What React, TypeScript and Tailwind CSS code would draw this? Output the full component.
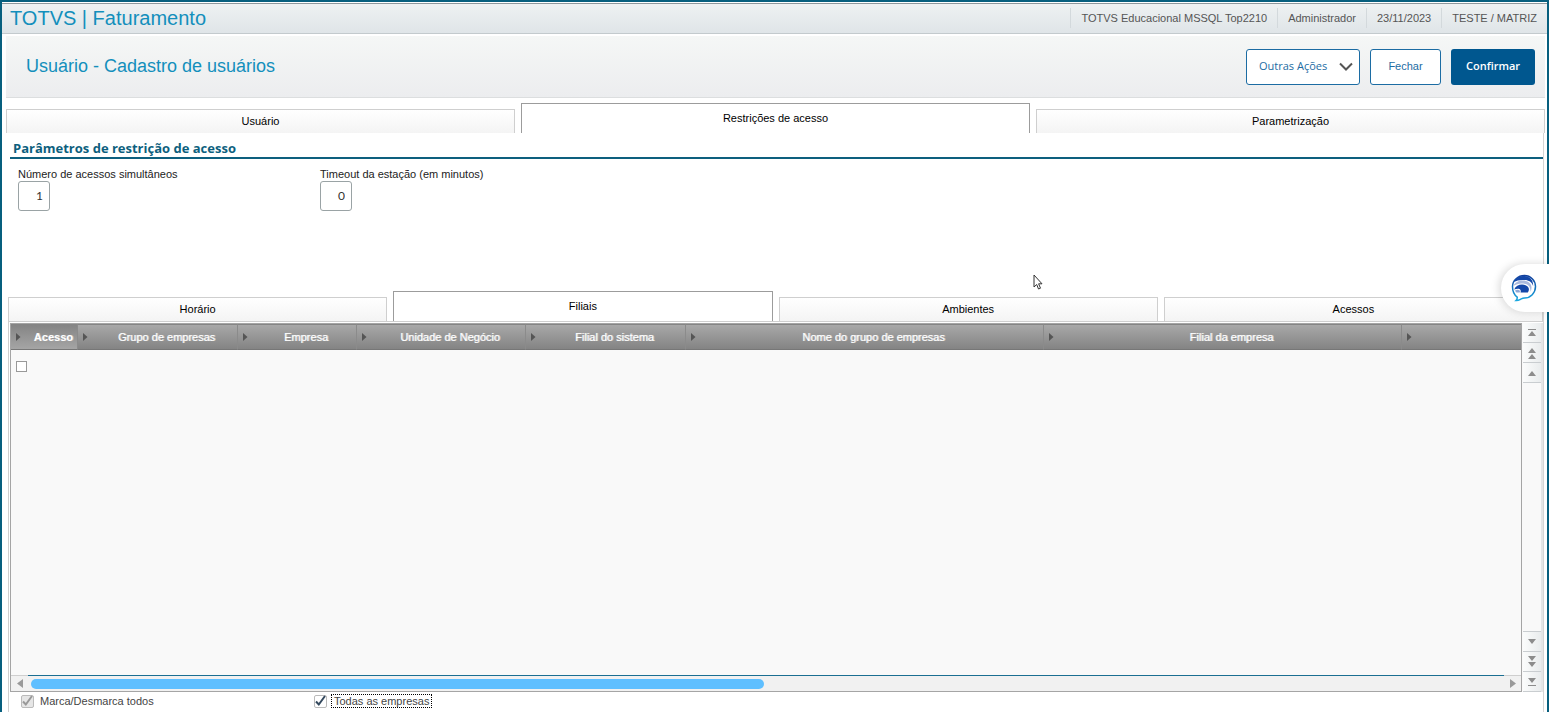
import { useState } from "react";

const STATUS = ["TOTVS Educacional MSSQL Top2210", "Administrador", "23/11/2023", "TESTE / MATRIZ"];

const MAIN_TABS = ["Usuário", "Restrições de acesso", "Parametrização"];

const SUB_TABS = ["Horário", "Filiais", "Ambientes", "Acessos"];

const COLUMNS = [
  { label: "Acesso", width: "w-[67px]" },
  { label: "Grupo de empresas", width: "w-[160px]" },
  { label: "Empresa", width: "w-[119px]" },
  { label: "Unidade de Negócio", width: "w-[169px]" },
  { label: "Filial do sistema", width: "w-[160px]" },
  { label: "Nome do grupo de empresas", width: "w-[358px]" },
  { label: "Filial da empresa", width: "w-[358px]" },
  { label: "", width: "" },
];

function Tabs({ items, active, onChange }: { items: string[]; active: number; onChange: (i: number) => void }) {
  return (
    <div role="tablist" className="flex items-end gap-1.5">
      {items.map((item, i) => (
        <button
          key={item}
          role="tab"
          aria-selected={i === active}
          onClick={() => onChange(i)}
          className={
            i === active
              ? "h-[30px] min-w-0 flex-1 border border-b-0 border-[#9c9c9c] bg-white text-[11px] text-black"
              : "h-6 min-w-0 flex-1 border border-b-0 border-[#cfcfcf] bg-linear-to-b from-white to-[#f4f4f4] text-[11px] text-black"
          }
        >
          {item}
        </button>
      ))}
    </div>
  );
}

function NumberField({ id, label, value }: { id: string; label: string; value: string }) {
  return (
    <div className="flex w-[302px] flex-col">
      <label htmlFor={id} className="leading-[14px] text-[#222]">
        {label}
      </label>
      <input
        id={id}
        defaultValue={value}
        className="h-[30px] w-8 rounded-[3px] border border-[#9aa3a5] bg-white pr-1.5 pb-0.5 text-right font-[Lato,sans-serif] text-xs text-[#333] outline-none"
      />
    </div>
  );
}

function ScrollButton({ label, path }: { label: string; path: string }) {
  return (
    <button aria-label={label} className="flex h-5 w-full items-center justify-center border-b border-[#c9cdd0] bg-linear-to-r from-[#fbfcfc] to-[#e9eced]">
      <svg width="10" height="14" viewBox="0 0 10 14" fill="#8c8c8c">
        <path d={path} />
      </svg>
    </button>
  );
}

function CheckBox({ disabled = false }: { disabled?: boolean }) {
  return (
    <span className="grid size-3.5 place-items-center">
      <input
        type="checkbox"
        defaultChecked
        disabled={disabled}
        className="peer col-start-1 row-start-1 size-[13px] appearance-none rounded-xs border border-[#bbb] bg-white disabled:bg-[#e6e6e6]"
      />
      <svg
        className="pointer-events-none invisible col-start-1 row-start-1 text-[#34495e] peer-checked:visible peer-disabled:text-[#999]"
        width="12"
        height="12"
        viewBox="0 0 12 12"
        fill="none"
        stroke="currentColor"
        strokeWidth="2"
      >
        <path d="M2 6.500L4.800 9.500 11 1" />
      </svg>
    </span>
  );
}

function ChatLogo() {
  return (
    <svg width="26" height="28" viewBox="0 0 26 28">
      <defs>
        <linearGradient id="bubble" x1="0" y1="0" x2="0" y2="1">
          <stop offset="0" stopColor="#123f9c" />
          <stop offset="1" stopColor="#18a8e0" />
        </linearGradient>
      </defs>
      <path
        d="M13.500 1.500C19.500 1.500 24.500 6.300 24.500 12.600S19.500 24 13.500 24c-1.500.1-2.500.6-4 1.300-1.500.8-3 1.300-4.500 1.200 1-.9 1.400-1.800 1.200-3.300C3.200 21 1.500 17 1.500 12.600 1.500 6.300 7 1.500 13.500 1.500z"
        fill="#fff"
        stroke="url(#bubble)"
        strokeWidth="1.500"
      />
      <path d="M3 8C5 3.800 9 2 13.500 2c5.500.2 9 4.500 8.600 10-1-4-4.600-6.200-9.100-6C8.500 5.800 5.500 6.700 3 8z" fill="#1447a8" />
      <path d="M2.300 12C4.500 6.800 12 5 17 7.800c3.500 2.200 4.500 5.700 2.500 10.200.3-5-2-7.600-6-8.300C9.500 9 5.500 9.700 2.300 12z" fill="#a9b9dd" />
      <path d="M3.200 15.500C5 10.800 11 9.500 15 11.500c3.500 1.800 3.500 4.500 1.800 7H9.500c.8-2.200-.2-3.600-2-3.800-1.500-.1-3 .2-4.300.8z" fill="#1447a8" />
      <path d="M4 16.500c1.800-1 3.400-1 4.400-.3.700.5.700 1.400.2 2.300H5.400C4.700 17.900 4.300 17.300 4 16.500z" fill="#8ea6d6" />
    </svg>
  );
}

export default function App() {
  const [mainTab, setMainTab] = useState(1);
  const [subTab, setSubTab] = useState(1);

  return (
    <div className="relative flex min-h-screen flex-col border-2 border-b-0 border-[#075f7e] bg-white font-['Liberation_Sans',Arial,sans-serif] text-[11px]">
      <header className="mt-px flex h-[31px] items-center justify-between border-t border-b border-t-[#8d979c] border-b-[#c3cacd] bg-linear-to-b from-[#eef1f2] to-[#dfe5e8] pr-2.5 pb-0.5 pl-2">
        <h1 className="text-xl leading-6 text-[#138fbc]">TOTVS | Faturamento</h1>
        <div className="flex leading-5 text-[#555]">
          {STATUS.map((item) => (
            <span key={item} className="border-l border-[#d3d9dc] pl-2.5 not-last:pr-2.5">
              {item}
            </span>
          ))}
        </div>
      </header>

      <section className="mt-0.5 mr-0.5 ml-1 flex h-[62px] items-center justify-between border-b border-[#dcdedf] bg-linear-to-b from-[#f5f7f6] to-[#ecedef] pr-2.5 pl-5">
        <h2 className="pb-0.5 text-lg text-[#138fbc]">Usuário - Cadastro de usuários</h2>
        <div className="flex gap-2.5 font-['Open_Sans',sans-serif]">
          <button className="flex h-9 w-[114px] items-center justify-between rounded-[3px] border border-[#1c6ca3] bg-white pr-1.5 pl-3 text-[#1c6ca3]">
            Outras Ações
            <svg width="14" height="9" viewBox="0 0 14 9" fill="none" stroke="#555" strokeWidth="2">
              <path d="M1 1.500l6 6 6-6" />
            </svg>
          </button>
          <button className="h-9 w-[71px] rounded-[3px] border border-[#1c6ca3] bg-white font-['Liberation_Sans',Arial,sans-serif] text-[#1c6ca3]">
            Fechar
          </button>
          <button className="h-9 w-[84px] rounded-[3px] bg-[#00578f] font-semibold text-white">Confirmar</button>
        </div>
      </section>

      <main className="flex flex-1 flex-col pr-0.5 pl-1">
        <div className="mt-[5px]">
          <Tabs items={MAIN_TABS} active={mainTab} onChange={setMainTab} />
        </div>

        <div className="mr-px flex flex-1 flex-col border-r border-[#d5d5d5]">
          <h3 className="ml-1 border-b-2 border-[#0d5f7e] pt-1.5 pl-[3px] font-['Open_Sans',sans-serif] text-[13px] leading-[18px] font-bold text-[#0d5f7e]">
            Parâmetros de restrição de acesso
          </h3>
          <div className="flex pt-2 pl-3">
            <NumberField id="acessos" label="Número de acessos simultâneos" value="1" />
            <NumberField id="timeout" label="Timeout da estação (em minutos)" value="0" />
          </div>

          <div className="mt-20 ml-0.5 flex flex-1 flex-col">
            <Tabs items={SUB_TABS} active={subTab} onChange={setSubTab} />
            <div className="flex flex-1 flex-col border-t border-l border-[#cfcfcf] pt-px pl-px">
              <div className="flex flex-1">
                <div className="flex min-w-0 flex-1 flex-col border border-[#a5a5a5] bg-[#f9f9f9]">
                  <table className="w-full table-fixed border-separate border-spacing-0">
                    <thead>
                      <tr className="h-[26px] bg-linear-to-b from-[#aaa] to-[#828282]">
                        {COLUMNS.map((col, i) => (
                          <th
                            key={i}
                            className={`${col.width} border-t border-r border-b border-t-[#858585] border-r-[#8b8b8b] border-b-[#777] p-0 first:bg-linear-to-b first:from-[#858585] first:to-[#a5a5a5] last:border-r-0`}
                          >
                            <div className="flex items-center pr-1 pl-[5px]">
                              <svg width="5" height="8" viewBox="0 0 5 8" fill="#555">
                                <path d="M0 0l4.500 4L0 8z" />
                              </svg>
                              <span
                                className={
                                  i === 0
                                    ? "flex-1 text-right font-bold text-white [text-shadow:1px_0_#ffffff66]"
                                    : "flex-1 pl-3 text-center font-normal text-white [text-shadow:1px_0_#ffffff99]"
                                }
                              >
                                {col.label}
                              </span>
                            </div>
                          </th>
                        ))}
                      </tr>
                    </thead>
                    <tbody>
                      <tr className="h-8">
                        <td className="p-0 pl-[5px]">
                          <input type="checkbox" aria-label="Acesso" className="block size-[11px] appearance-none border border-[#999] bg-white" />
                        </td>
                        <td colSpan={7} />
                      </tr>
                    </tbody>
                  </table>
                  <div className="mt-auto flex h-4 items-center bg-[#f1f1f1]">
                    <button aria-label="Rolar para a esquerda" className="flex h-full w-[17px] items-center justify-center border-t border-[#cfcfcf]">
                      <svg width="6" height="9" viewBox="0 0 6 9" fill="#999">
                        <path d="M6 0v9L0 4.500z" />
                      </svg>
                    </button>
                    <div className="flex h-full flex-1 items-center border-t border-[#1b6f92] pl-[3px]">
                      <div className="h-2.5 w-[calc(50%-4px)] rounded-full bg-[#5fbfff]" />
                    </div>
                    <button aria-label="Rolar para a direita" className="flex h-full w-[17px] items-center justify-center border-t border-[#cfcfcf]">
                      <svg width="6" height="9" viewBox="0 0 6 9" fill="#999">
                        <path d="M0 0v9l6-4.500z" />
                      </svg>
                    </button>
                  </div>
                </div>
                <div className="flex w-[21px] flex-col justify-between border-r-2 border-[#e3e5e6] bg-[#f9f9f9] pl-px">
                  <div>
                    <ScrollButton label="Início" path="M1 3h8v1H1zM5 5l4 5H1z" />
                    <ScrollButton label="Página acima" path="M5 2l4 5H1zM5 8l4 5H1z" />
                    <ScrollButton label="Linha acima" path="M5 5l4 5H1z" />
                  </div>
                  <div className="border-t border-[#c9cdd0]">
                    <ScrollButton label="Linha abaixo" path="M5 9l4-5H1z" />
                    <ScrollButton label="Página abaixo" path="M5 6l4-5H1zM5 12l4-5H1z" />
                    <ScrollButton label="Fim" path="M5 8l4-5H1zM1 10h8v1H1z" />
                  </div>
                </div>
              </div>
              <div className="flex h-5 items-center pb-0.5 pl-2.5 text-[#444]">
                <label className="flex w-[293px] items-center gap-1.5">
                  <CheckBox disabled />
                  Marca/Desmarca todos
                </label>
                <label className="flex items-center gap-1">
                  <CheckBox />
                  <span className="border border-dotted border-black px-0.5 leading-3">Todas as empresas</span>
                </label>
              </div>
            </div>
          </div>
        </div>
      </main>

      <button
        aria-label="Abrir chat"
        className="absolute top-[262px] -right-0.5 flex h-12 w-12 items-center rounded-l-full bg-white pl-2.5 shadow-[-2px_0_8px_#00000026]"
      >
        <ChatLogo />
      </button>
      <svg className="absolute top-[272px] left-[1031px]" width="10" height="16" viewBox="0 0 10 16" fill="#fff" stroke="#333">
        <path d="M1 1v12l2.700-2.500L5.500 15l2-.8-1.900-4.400H9z" />
      </svg>
    </div>
  );
}
